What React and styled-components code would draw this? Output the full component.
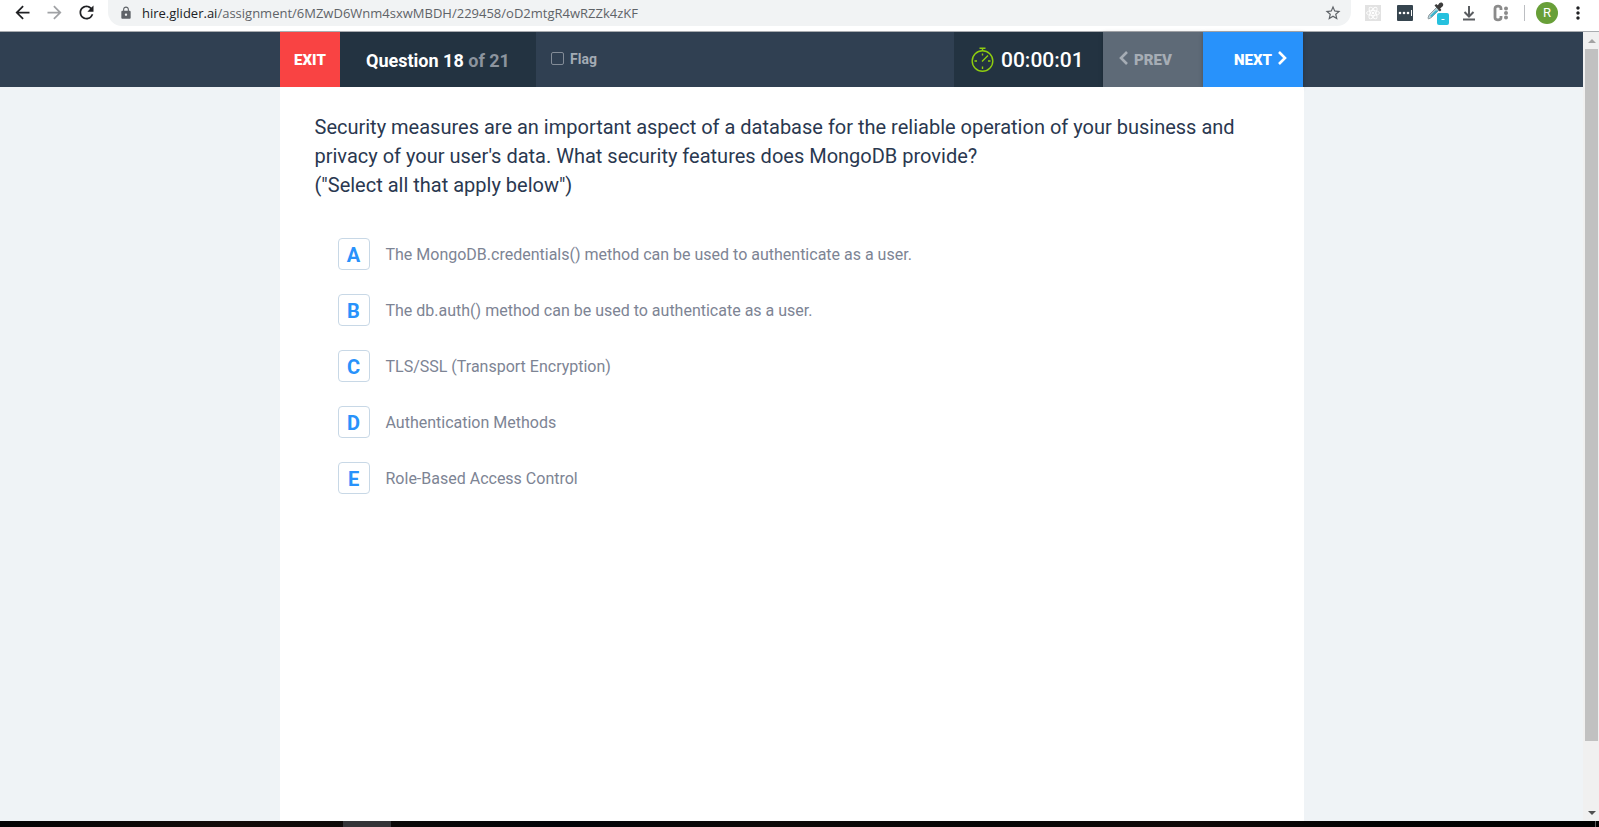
import React from "react";
import styled, { createGlobalStyle, css } from "styled-components";
import {
  MdArrowBack,
  MdArrowForward,
  MdRefresh,
  MdLock,
  MdStarBorder,
  MdMoreVert,
} from "react-icons/md";

const GlobalStyle = createGlobalStyle`
  *, *::before, *::after { box-sizing: border-box; }
  body { margin: 0; font-family: Roboto, "Liberation Sans", sans-serif; background: #fff; }
  button, input { font: inherit; margin: 0; }
`;

const Screen = styled.div`
  display: flex;
  flex-direction: column;
  min-height: 100vh;
`;

/* Browser toolbar */

const Toolbar = styled.nav`
  display: flex;
  align-items: center;
  height: 32px;
  padding: 0 10px 6px 11px;
  border-bottom: 1px solid #a9acb0;
  background: #fff;
`;

const ToolButton = styled.button`
  display: flex;
  align-items: center;
  justify-content: center;
  flex: none;
  width: ${(p) => p.$width || 32}px;
  height: 26px;
  padding: 0;
  border: 0;
  background: none;
  color: ${(p) => p.$color || "#202124"};
`;

const AddressBar = styled.div`
  display: flex;
  align-items: center;
  flex: 1;
  height: 27px;
  margin-left: 11px;
  padding: 0 8px 0 11px;
  border-radius: 0 0 14px 14px;
  background: #f1f3f4;
  color: #5f6368;
`;

const Address = styled.a`
  flex: 1;
  margin-left: 9px;
  font-family: "Open Sans", "Noto Sans", sans-serif;
  font-size: 13px;
  line-height: 20px;
  color: #5f6368;
  text-decoration: none;
  white-space: nowrap;
`;

const Domain = styled.span`
  color: #202124;
`;

const Extensions = styled.div`
  display: flex;
  align-items: center;
  margin-left: 6px;
`;

const Divider = styled.span`
  width: 1px;
  height: 16px;
  margin: 0 11px 0 5px;
  background: #bcbec2;
`;

const Avatar = styled.button`
  width: 22px;
  height: 22px;
  margin-right: 9px;
  padding: 0;
  border: 0;
  border-radius: 50%;
  background: #689f38;
  color: #fff;
  font-size: 13px;
  line-height: 22px;
`;

/* Page */

const Viewport = styled.div`
  display: flex;
  flex: 1;
`;

const Page = styled.div`
  display: flex;
  flex-direction: column;
  flex: 1;
  background: #eff3f6;
`;

const Header = styled.header`
  background: #304052;
`;

const HeaderInner = styled.div`
  display: flex;
  max-width: 1023px;
  height: 55px;
  margin: 0 auto;
`;

const navButton = css`
  flex: none;
  padding: 0;
  border: 0;
  font-size: 15px;
  font-weight: 900;
  color: #fff;
`;

const ExitButton = styled.button`
  ${navButton}
  width: 60px;
  background: #f94343;
`;

const Progress = styled.div`
  display: flex;
  align-items: center;
  justify-content: center;
  width: 196px;
  padding-top: 1px;
  background: #233341;
  color: #fff;
  font-size: 18px;
  font-weight: 700;
  white-space: pre;
`;

const Total = styled.span`
  color: #8c949e;
`;

const FlagLabel = styled.label`
  display: flex;
  align-items: center;
  gap: 6px;
  flex: 1;
  padding: 0 0 2px 15px;
  color: #a3abb4;
  font-size: 14px;
  font-weight: 700;
`;

const FlagBox = styled.input`
  appearance: none;
  width: 13px;
  height: 13px;
  border: 1px solid #838c97;
  border-radius: 2px;
`;

const Timer = styled.div`
  display: flex;
  align-items: center;
  gap: 7px;
  width: 149px;
  padding-left: 17px;
  background: #233341;
  color: #fff;
  font-size: 21px;
  font-weight: 500;
`;

const StepButton = styled.button`
  ${navButton}
  display: flex;
  align-items: center;
  justify-content: ${(p) => (p.$primary ? "flex-end" : "flex-start")};
  gap: 6px;
  width: 100px;
  padding: 0 16px;
  background: ${(p) => (p.$primary ? "#2892fb" : "#5e6a77")};
  color: ${(p) => (p.$primary ? "#fff" : "#a6adb5")};
  box-shadow: 0 1px 4px rgba(0, 0, 0, 0.25);
`;

const ChevronIcon = styled.svg`
  margin-bottom: 3px;
`;

const Content = styled.main`
  flex: 1;
  width: 100%;
  max-width: 1024px;
  margin: 0 auto;
  padding: 26px 34px 26px 35px;
  background: #fff;
`;

const Question = styled.h1`
  margin: 0;
  color: #2a3850;
  font-size: 20px;
  font-weight: 400;
  line-height: 29px;
`;

const Options = styled.ul`
  display: flex;
  flex-direction: column;
  gap: 24px;
  margin: 38px 0 0;
  padding: 0 0 0 23px;
  list-style: none;
`;

const Option = styled.label`
  display: flex;
  align-items: center;
  gap: 16px;
`;

const LetterBox = styled.span`
  display: grid;
  grid-template: 32px / 32px;
  & > * { grid-area: 1 / 1; }
`;

const OptionInput = styled.input`
  appearance: none;
  border: 1px solid #c8d8e6;
  border-radius: 4px;
  background: #fff;
`;

const Letter = styled.span`
  padding-top: 2px;
  color: #2892fb;
  font-size: 20px;
  font-weight: 700;
  line-height: 30px;
  text-align: center;
  pointer-events: none;
`;

const OptionText = styled.span`
  padding-top: 2px;
  color: #7d8494;
  font-size: 16px;
  line-height: 30px;
`;

/* Scrollbar and desktop edge */

const Scrollbar = styled.div`
  display: flex;
  flex-direction: column;
  width: 16px;
  padding: 0 1px 0 2px;
  background: #f0f0f0;
`;

const ScrollArrow = styled.span`
  display: flex;
  align-items: center;
  justify-content: center;
  height: 17px;
`;

const Track = styled.div`
  display: grid;
  grid-template-rows: 11fr 1fr;
  flex: 1;
`;

const Thumb = styled.div`
  background: #c1c1c1;
`;

const DesktopEdge = styled.footer`
  display: grid;
  grid-template-columns: 343fr 48fr 1204fr 1px 3px;
  height: 6px;
  background: linear-gradient(90deg, #030304, #130b09 14%, #0a0808 26%, #020307 35%, #0d0908 48%, #060505 62%, #100908 74%, #020202 86%, #000);
`;

const ActiveTile = styled.span`
  grid-column: 2;
  background: #343438;
`;

const ShowDesktop = styled.span`
  grid-column: 4;
  background: #5c5c5c;
`;

const ReactMark = () => (
  <svg width="16" height="16" viewBox="0 0 16 16" fill="none" stroke="#fff" strokeWidth="0.9">
    <rect width="16" height="16" fill="#e2e2e2" stroke="none" />
    <ellipse cx="8" cy="8" rx="6.5" ry="2.5" />
    <ellipse cx="8" cy="8" rx="6.5" ry="2.5" transform="rotate(60 8 8)" />
    <ellipse cx="8" cy="8" rx="6.5" ry="2.5" transform="rotate(120 8 8)" />
    <circle cx="8" cy="8" r="1.3" fill="#fff" stroke="none" />
  </svg>
);

const PasswordMark = () => (
  <svg width="16" height="16" viewBox="0 0 16 16">
    <rect width="16" height="16" rx="1" fill="#36454f" />
    <circle cx="3" cy="8" r="1.3" fill="#fff" />
    <circle cx="7" cy="8" r="1.3" fill="#fff" />
    <circle cx="11" cy="8" r="1.3" fill="#fff" />
    <path d="M14.500 5v6" stroke="#fff" strokeWidth="1" />
  </svg>
);

const DropperMark = () => (
  <svg width="22" height="24" viewBox="0 0 22 24">
    <path d="M1 17l1-3 8-8 2.500 2.500-8 8L1.500 18z" fill="#b9d6dc" stroke="#7d8a90" strokeWidth="0.8" />
    <path d="M3 15l5.500-5.500h3L4.500 16z" fill="#35b5cf" />
    <path d="M7.500 4.500L9.200 3l1.600 1.200L12.500 2c2-1.800 5 1 3.200 3.200l-2.500 2.200 1.200 1.600-1.500 1.600z" fill="#3c3c3c" />
    <rect x="10" y="12" width="12" height="12" rx="2" fill="#26c1de" />
    <path d="M14.500 18.500h3" stroke="#fff" strokeWidth="1" />
  </svg>
);

const DownloadMark = () => (
  <svg width="14" height="16" viewBox="0 0 14 16" fill="none" stroke="#5a5d61" strokeWidth="2">
    <path d="M7 1v10M2.500 7L7 11.500 11.500 7M1 14.500h12" />
  </svg>
);

const ColonMark = () => (
  <svg width="16" height="18" viewBox="0 0 16 18" fill="none" stroke="#8b8b8b">
    <path d="M8 6V4.500C8 1.300 2 1.300 2 4.500v9c0 3.200 6 3.200 6 0V12" strokeWidth="2.800" />
    <g fill="#8b8b8b" stroke="none">
      <circle cx="13" cy="4.500" r="2" />
      <circle cx="13" cy="9" r="2" />
      <circle cx="13" cy="13.500" r="2" />
    </g>
  </svg>
);

const Stopwatch = () => (
  <svg width="23" height="26" viewBox="0 0 23 26" fill="none" stroke="#8fce0f" strokeWidth="1.400">
    <circle cx="11.500" cy="14" r="10.300" />
    <path d="M8.500 1.200h6M11.500 1.500V4M11.500 6.500v2M11.500 19.500v2.500M3.500 14H6M17 14h2.500M11 14.500l6-6" />
  </svg>
);

const Chevron = ({ d }) => (
  <ChevronIcon width="9" height="14" viewBox="0 0 9 14" fill="none" stroke="currentColor" strokeWidth="2.600">
    <path d={d} />
  </ChevronIcon>
);

const options = [
  ["A", "The MongoDB.credentials() method can be used to authenticate as a user."],
  ["B", "The db.auth() method can be used to authenticate as a user."],
  ["C", "TLS/SSL (Transport Encryption)"],
  ["D", "Authentication Methods"],
  ["E", "Role-Based Access Control"],
];

export default function App() {
  return (
    <Screen>
      <GlobalStyle />
      <Toolbar aria-label="Browser">
        <ToolButton $width={22} aria-label="Back"><MdArrowBack size={21} /></ToolButton>
        <ToolButton $width={42} $color="#a0a2a5" aria-label="Forward"><MdArrowForward size={21} /></ToolButton>
        <ToolButton $width={22} aria-label="Reload"><MdRefresh size={21} /></ToolButton>
        <AddressBar>
          <MdLock size={14} />
          <Address href="#assignment">
            <Domain>hire.glider.ai</Domain>/assignment/6MZwD6Wnm4sxwMBDH/229458/oD2mtgR4wRZZk4zKF
          </Address>
          <ToolButton $width={20} $color="#5f6368" aria-label="Bookmark"><MdStarBorder size={18} /></ToolButton>
        </AddressBar>
        <Extensions>
          <ToolButton aria-label="React tools"><ReactMark /></ToolButton>
          <ToolButton aria-label="Passwords"><PasswordMark /></ToolButton>
          <ToolButton $width={34} aria-label="Colour picker"><DropperMark /></ToolButton>
          <ToolButton $width={28} aria-label="Downloads"><DownloadMark /></ToolButton>
          <ToolButton $width={36} aria-label="Extension"><ColonMark /></ToolButton>
          <Divider />
          <Avatar>R</Avatar>
          <ToolButton $width={22} aria-label="Menu"><MdMoreVert size={20} /></ToolButton>
        </Extensions>
      </Toolbar>
      <Viewport>
        <Page>
          <Header>
            <HeaderInner>
              <ExitButton>EXIT</ExitButton>
              <Progress>Question 18 <Total>of 21</Total></Progress>
              <FlagLabel><FlagBox type="checkbox" />Flag</FlagLabel>
              <Timer><Stopwatch />00:00:01</Timer>
              <StepButton disabled><Chevron d="M8 1L2 7l6 6" />PREV</StepButton>
              <StepButton $primary>NEXT<Chevron d="M1 1l6 6-6 6" /></StepButton>
            </HeaderInner>
          </Header>
          <Content>
            <Question>
              Security measures are an important aspect of a database for the reliable operation of your business and privacy of your user's data. What security features does MongoDB provide?
              <br />
              ("Select all that apply below")
            </Question>
            <Options>
              {options.map(([letter, text]) => (
                <li key={letter}>
                  <Option>
                    <LetterBox>
                      <OptionInput type="checkbox" />
                      <Letter>{letter}</Letter>
                    </LetterBox>
                    <OptionText>{text}</OptionText>
                  </Option>
                </li>
              ))}
            </Options>
          </Content>
        </Page>
        <Scrollbar aria-hidden="true">
          <ScrollArrow>
            <svg width="8" height="4" viewBox="0 0 8 4"><path d="M0 4l4-4 4 4z" fill="#a3a3a3" /></svg>
          </ScrollArrow>
          <Track><Thumb /></Track>
          <ScrollArrow>
            <svg width="8" height="4" viewBox="0 0 8 4"><path d="M0 0l4 4 4-4z" fill="#505050" /></svg>
          </ScrollArrow>
        </Scrollbar>
      </Viewport>
      <DesktopEdge>
        <ActiveTile />
        <ShowDesktop />
      </DesktopEdge>
    </Screen>
  );
}
